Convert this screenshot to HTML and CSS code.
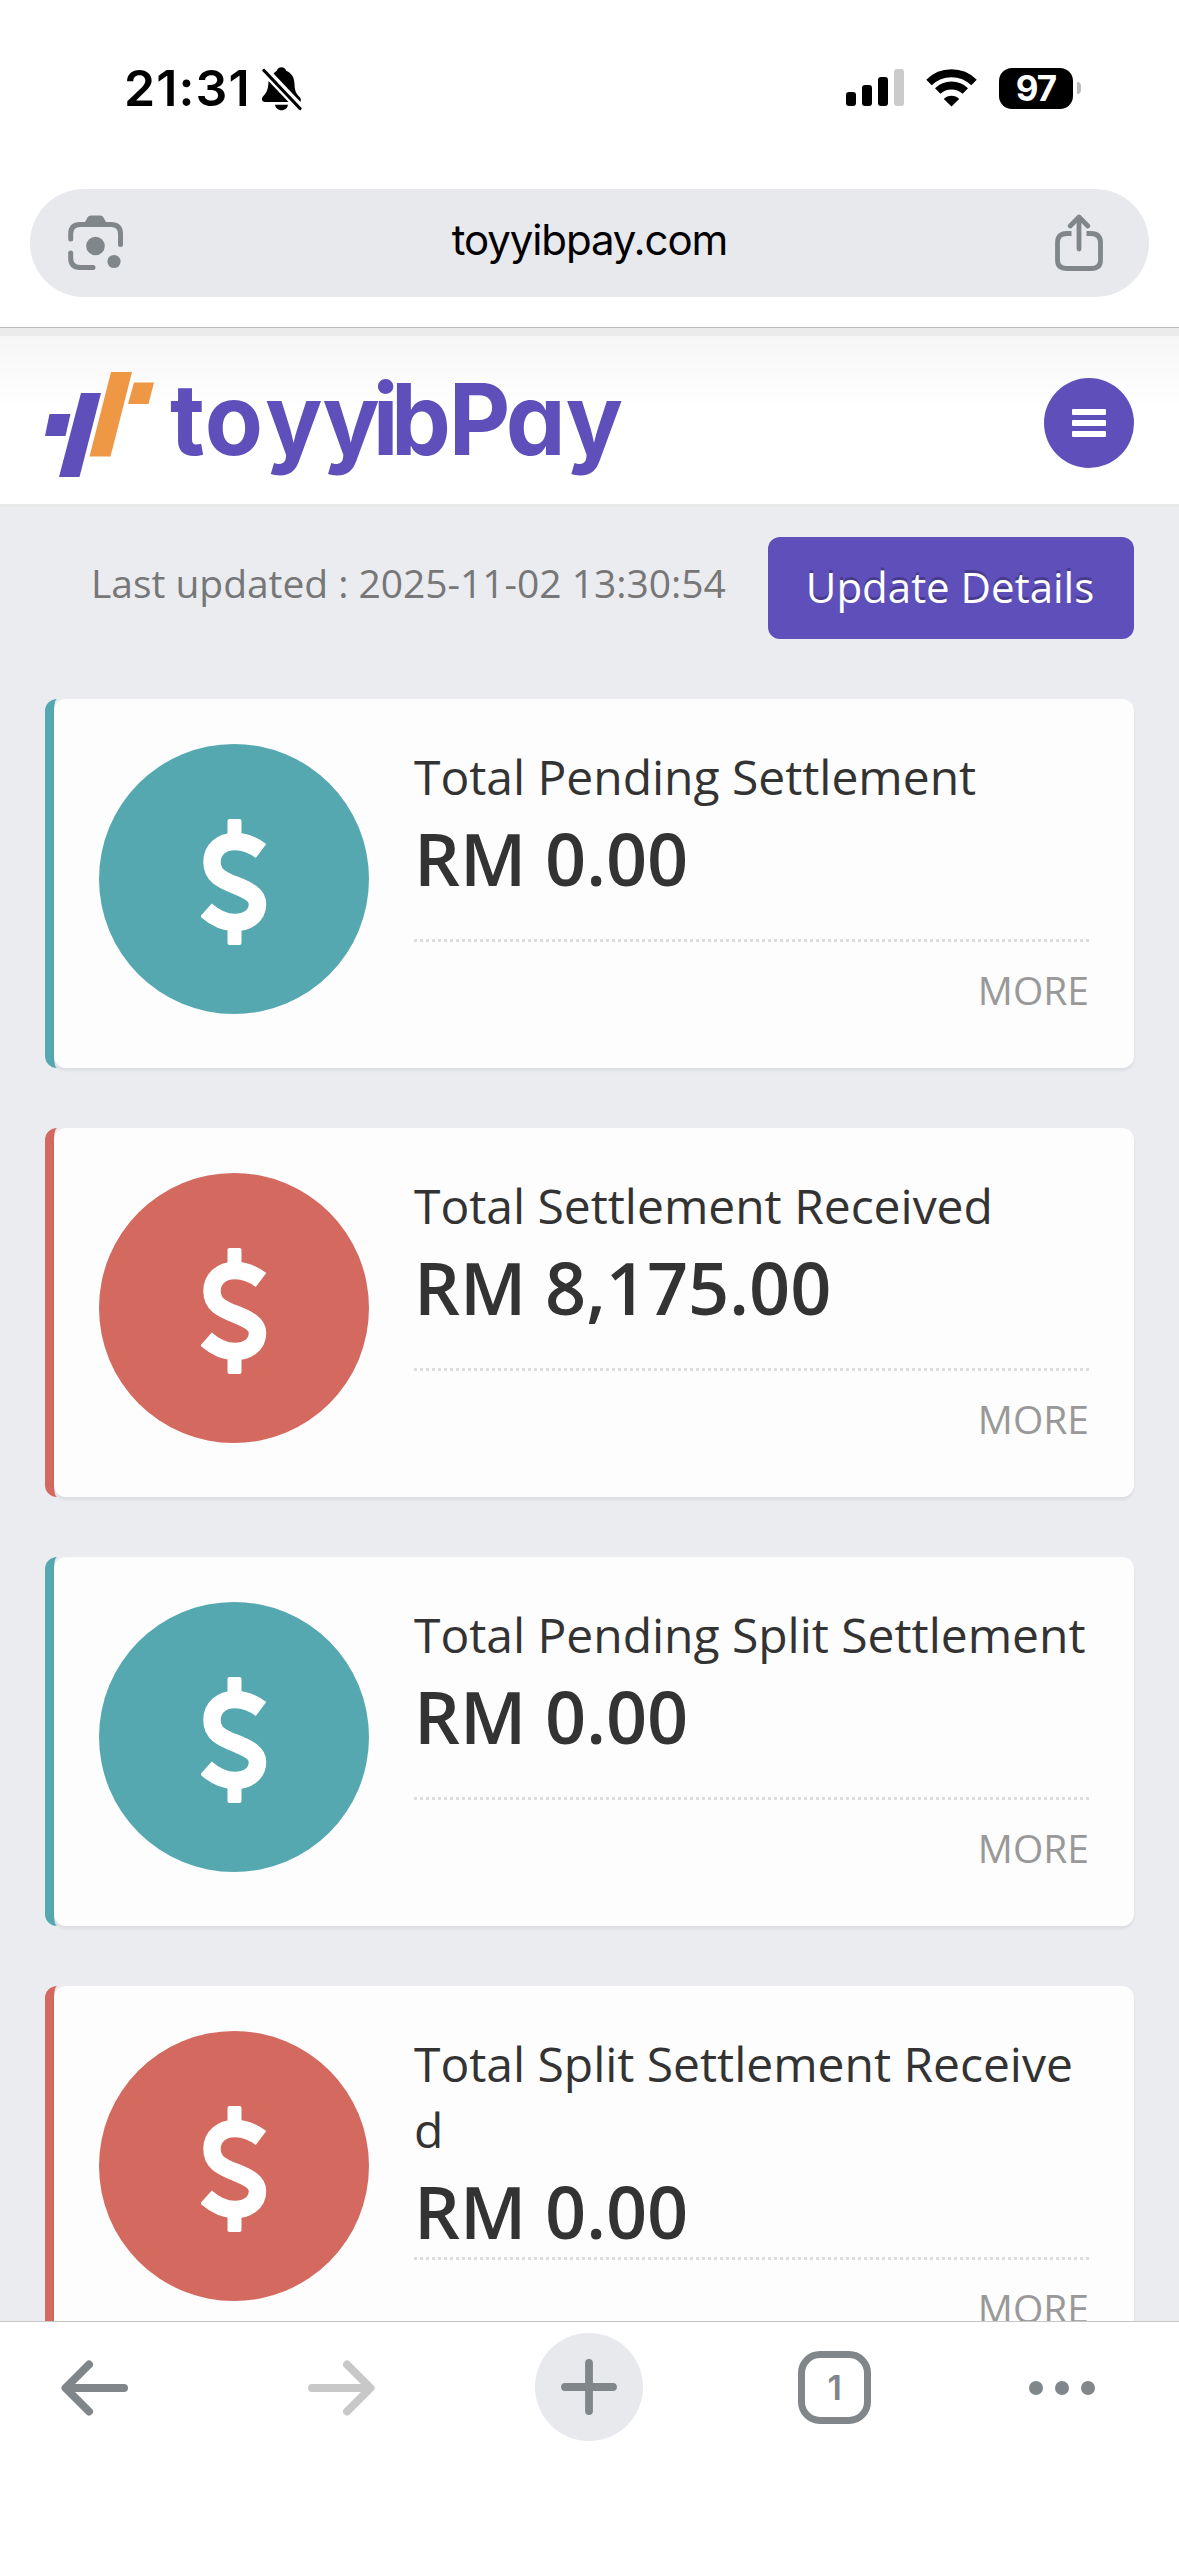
FILE: index.html
```html
<!DOCTYPE html>
<html lang="en">
<head>
<meta charset="utf-8">
<title>toyyibPay</title>
<link rel="stylesheet" href="styles.css">
</head>

<body>
<svg class="defs" width="0" height="0">
	<symbol id="dollar" viewBox="0 0 66 126">
		<path d="M60 32C52 26 44 22.5 34 22.5C20 22.5 11 31 11 43C11 56 20 60.5 34 66C48 71.5 56.5 76 56.5 85C56.5 97 46 103.5 34 103.5C23 103.5 14 99 5 91" fill="none" stroke="#fff" stroke-width="17.500"/>
		<rect x="26.500" y="0" width="14" height="20" rx="2" fill="#fff"/>
		<rect x="26.500" y="106" width="14" height="20" rx="2" fill="#fff"/>
	</symbol>
</svg>

<!-- status bar -->
<div class="status">
	<div class="status-left">
		<span class="time">21:31</span>
		<svg width="40" height="44" viewBox="0 0 40 44">
			<path d="M11.500 6.500C13 5 14.300 4.300 15 3.500C15.500 1.500 17.300 0.300 19.500 0.300C21.700 0.300 23.500 1.500 24.200 3.800C30 6.500 32.300 11 32.500 17C32.700 24 34 26.500 38 30.500C38.900 31.600 39 32.600 38.500 35Z"/>
			<path d="M6.500 14L26.500 35H3C-0.300 35 -1 31.500 1.200 29.200C5 25 6.300 22 6.500 14Z"/>
			<path d="M13 37.800H26C25.500 41 22.900 43.300 19.500 43.300C16.100 43.300 13.500 41 13 37.800Z"/>
			<path d="M2 3.500L38 41.500" stroke="#000" stroke-width="3.200" stroke-linecap="round"/>
		</svg>
	</div>
	<div class="status-right">
		<svg width="58" height="38" viewBox="0 0 58 38">
			<rect x="0" y="23" width="10" height="14" rx="3"/>
			<rect x="16" y="16" width="10" height="21" rx="3"/>
			<rect x="32" y="8" width="10" height="29" rx="3"/>
			<rect x="48" y="0" width="10" height="37" rx="3" fill="#cbcbcb"/>
		</svg>
		<svg class="wifi" width="51" height="38" viewBox="0 0 51 38">
			<path d="M3 13.500A32 32 0 0 1 48 13.500M11.700 22A20 20 0 0 1 39.300 22" fill="none" stroke="#000" stroke-width="7.800"/>
			<path d="M17.800 30A11 11 0 0 1 33.200 30L25.500 37.500Z"/>
		</svg>
		<span class="battery">97</span>
		<i class="battery-tip"></i>
	</div>
</div>

<!-- address bar -->
<div class="address">
	<svg width="56" height="56" viewBox="0 0 56 56" fill="none" stroke="#80868a" stroke-width="5" stroke-linecap="round">
		<path d="M2.700 24V19Q2.700 9.500 12 9.500H43Q52.500 9.500 52.500 19V29.500M2.700 38V43Q2.700 52.500 12 52.500H25"/>
		<path d="M16 9L19.500 2.500Q20.500 0.500 23 0.500H32Q34.500 0.500 35.500 2.500L39 9Z" fill="#80868a" stroke="none"/>
		<circle cx="27.500" cy="31" r="9.300" fill="#80868a" stroke="none"/>
		<circle cx="46" cy="46.500" r="6.600" fill="#80868a" stroke="none"/>
	</svg>
	<span class="url">toyyibpay.com</span>
	<svg width="48" height="58" viewBox="0 0 48 58" fill="none" stroke="#80868a" stroke-width="4.800" stroke-linejoin="round">
		<path d="M16.500 19.500H12Q2.500 19.500 2.500 29V46Q2.500 54.500 12 54.500H36Q45.500 54.500 45.500 46V29Q45.500 19.500 36 19.500H31.500"/>
		<path d="M24 35V3.500M15.200 12L24 3L32.800 12" stroke-linecap="round"/>
	</svg>
</div>

<div class="page">
	<div class="header">
		<svg class="logo" width="577" height="106" viewBox="0 0 577 106">
			<path d="M4.500 42H25.500L20.500 64H0Z" fill="#5f4fbb"/>
			<path d="M36 21H56L34.500 105H14Z" fill="#5f4fbb"/>
			<path d="M66 0H87L65.500 84.500H44.500Z" fill="#ee9744"/>
			<path d="M89 10.500H109L103.500 32H83Z" fill="#ee9744"/>
			<text class="logo-text" transform="scale(0.96 1)" x="130.200 166.500 229.500 289 341.500 360.500 420.500 480 542.500" y="83">toyyibPay</text>
		</svg>
		<div class="menu"><i></i><i></i><i></i></div>
	</div>

	<div class="update">
		<span class="updated">Last updated : 2025-11-02 13:30:54</span>
		<a class="btn">Update Details</a>
	</div>

	<div class="card teal">
		<div class="card-in">
			<div class="circle"><svg width="66" height="126"><use href="#dollar"/></svg></div>
			<div class="info">
				<div class="sum">
					<div class="title">Total Pending Settlement</div>
					<div class="amount">RM 0.00</div>
				</div>
				<div class="more">MORE</div>
			</div>
		</div>
	</div>

	<div class="card red">
		<div class="card-in">
			<div class="circle"><svg width="66" height="126"><use href="#dollar"/></svg></div>
			<div class="info">
				<div class="sum">
					<div class="title">Total Settlement Received</div>
					<div class="amount">RM 8,175.00</div>
				</div>
				<div class="more">MORE</div>
			</div>
		</div>
	</div>

	<div class="card teal">
		<div class="card-in">
			<div class="circle"><svg width="66" height="126"><use href="#dollar"/></svg></div>
			<div class="info">
				<div class="sum">
					<div class="title">Total Pending Split Settlement</div>
					<div class="amount">RM 0.00</div>
				</div>
				<div class="more">MORE</div>
			</div>
		</div>
	</div>

	<div class="card red">
		<div class="card-in">
			<div class="circle"><svg width="66" height="126"><use href="#dollar"/></svg></div>
			<div class="info">
				<div class="sum">
					<div class="title">Total Split Settlement Receive<br>d</div>
					<div class="amount">RM 0.00</div>
				</div>
				<div class="more">MORE</div>
			</div>
		</div>
	</div>
</div>

<!-- browser toolbar -->
<div class="toolbar">
	<svg width="68" height="56" viewBox="0 0 68 56" fill="none" stroke="#80868a" stroke-width="8" stroke-linecap="round" stroke-linejoin="round">
		<path d="M28 4.500L4.500 28L28 51.500M5 28H63"/>
	</svg>
	<svg class="forward" width="68" height="56" viewBox="0 0 68 56" fill="none" stroke="#c8c8c8" stroke-width="8" stroke-linecap="round" stroke-linejoin="round">
		<path d="M40 4.500L63.500 28L40 51.500M63 28H5"/>
	</svg>
	<div class="plus">
		<svg width="56" height="56" viewBox="0 0 56 56" stroke="#80868a" stroke-width="7.800" stroke-linecap="round">
			<path d="M28 4V52M4 28H52"/>
		</svg>
	</div>
	<div class="tabs">1</div>
	<div class="dots"><i></i><i></i><i></i></div>
</div>
</body>
</html>
```
FILE: styles.css
```css
*{box-sizing:border-box;}
body{margin:0;width:1179px;height:2556px;overflow:hidden;background:#fff;display:flex;flex-direction:column;font-family:"Open Sans",sans-serif;}
svg{display:block;flex:none;}
.defs{position:absolute;}

/* status bar */
.status{height:189px;flex:none;padding:67px 98px 0 124px;display:flex;justify-content:space-between;align-items:flex-start;font-family:Inter,sans-serif;}
.status-left{display:flex;gap:12px;}
.time{width:126px;font-size:50px;line-height:42px;font-weight:600;letter-spacing:1.1px;white-space:nowrap;}
.status-right{display:flex;height:42px;align-items:center;}
.wifi{margin-left:22px;}
.battery{margin-left:22px;width:74px;height:41px;border-radius:13px;background:#000;color:#fff;font-size:35px;font-weight:700;line-height:41px;text-align:center;letter-spacing:-1px;}
.battery-tip{width:4px;height:12px;margin-left:4px;border-radius:0 4px 4px 0;background:#bbb;}

/* address bar */
.address{height:108px;flex:none;margin:0 30px 30px;padding:0 46px 0 38px;border-radius:54px;background:#e8e9ed;display:flex;align-items:center;justify-content:space-between;}
.url{font-family:Inter,sans-serif;font-size:42px;line-height:50px;padding-bottom:6px;letter-spacing:-1.1px;}

/* web page */
.page{flex:1;min-height:0;overflow:hidden;border-top:1px solid #bbb;background:#ebecf0;}
.header{height:179px;border-top:8px solid #ebebeb;border-bottom:3px solid #e8e8e6;background:#fff linear-gradient(#f6f6f6,#fff 72px);padding:6px 45px 0;display:flex;align-items:center;justify-content:space-between;}
.logo{margin-top:3px;overflow:visible;}
.logo-text{font-family:Inter,sans-serif;font-size:99px;font-weight:700;fill:#5f4fbb;font-feature-settings:"cv11";}
.menu{width:90px;height:90px;border-radius:50%;background:#5f4fbb;display:flex;flex-direction:column;align-items:center;justify-content:center;gap:5px;}
.menu i{width:34px;height:6px;border-radius:1px;background:#fff;}
.update{height:192px;padding:30px 45px 0 91px;display:flex;justify-content:space-between;align-items:flex-start;}
.updated{font-size:39px;line-height:54px;margin-top:19px;color:#777;letter-spacing:-0.04px;white-space:nowrap;}
.btn{width:366px;height:102px;padding-right:2px;border-radius:12px;background:#5f4fbb;color:#fff;font-size:42px;line-height:100px;text-align:center;white-space:nowrap;text-shadow:0 -3px 0 rgba(0,0,0,0.25);}

.card{margin:0 45px 60px;border-left:9px solid;border-radius:12px;}
.teal{border-color:#56a8b0;}
.red{border-color:#d3695f;}
.card-in{min-height:369px;padding:45px;border-radius:12px;background:#fdfdfd;box-shadow:0 3px 3px rgba(0,0,0,0.06);display:flex;gap:45px;}
.circle{width:270px;height:270px;flex:none;border-radius:50%;display:flex;align-items:center;justify-content:center;padding-top:6px;}
.teal .circle{background:#56a8b0;}
.red .circle{background:#d3695f;}
.info{flex:1;color:#333;}
.sum{min-height:195px;}
.title{font-size:48px;line-height:66px;letter-spacing:-0.03px;white-space:nowrap;}
.amount{padding-top:3px;font-size:72px;line-height:91px;font-weight:600;white-space:nowrap;}
/* square dots 3px on, 3px off */
.more{padding-top:26px;background:repeating-linear-gradient(90deg,#ddd 0,#ddd 3px,transparent 3px,transparent 6px) no-repeat;background-size:100% 3px;text-align:right;font-size:39px;line-height:50px;color:#999;}

/* toolbar */
.toolbar{height:235px;flex:none;border-top:1px solid #c6c6c6;padding:11px 84px 0 61px;display:flex;justify-content:space-between;align-items:flex-start;}
.toolbar > *{margin-top:27px;}
.toolbar .forward{margin-left:22px;}
.toolbar .plus{width:108px;height:108px;margin-top:0;margin-left:4px;border-radius:50%;background:#e8e9ed;display:flex;align-items:center;justify-content:center;}
.toolbar .tabs{width:73px;height:73px;margin-top:18px;margin-right:2px;border:7px solid #80868a;border-radius:22px;color:#80868a;font-family:Inter,sans-serif;font-size:34px;font-weight:600;line-height:59px;text-align:center;}
.dots{height:56px;display:flex;align-items:center;gap:12px;}
.dots i{width:14px;height:14px;border-radius:50%;background:#80868a;}
```
